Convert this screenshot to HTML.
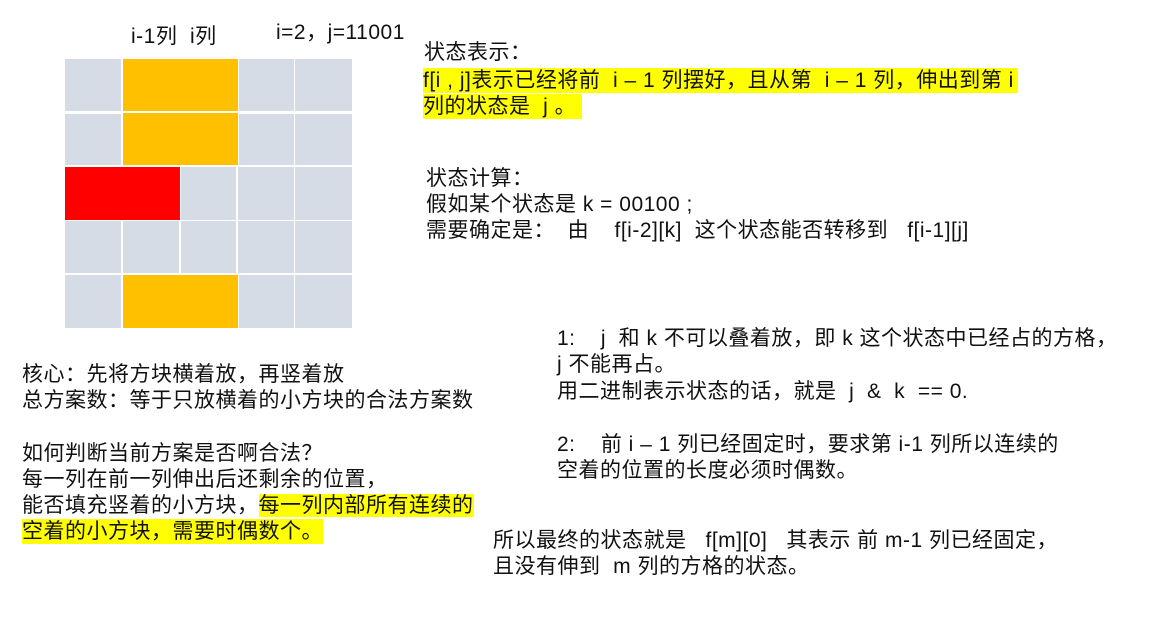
<!DOCTYPE html>
<html><head><meta charset="utf-8"><style>
body{margin:0;width:1153px;height:624px;background:#fff;position:relative;overflow:hidden;font-family:"Liberation Sans","Noto Sans CJK SC",sans-serif;color:#111;}
.c{position:absolute;background:#d6dce5;}
.o{position:absolute;background:#ffc000;}
.r{position:absolute;background:#ff0000;}
.t{position:absolute;font-size:21px;letter-spacing:0.5px;line-height:25px;white-space:pre;}
.h{background:#ffff00;}
</style></head><body>
<div class="t" style="left:131px;top:24px">i-1列  i列</div>
<div class="t" style="left:276px;top:20px">i=2，j=11001</div>

<div class="c" style="left:65px;top:59px;width:56px;height:52px"></div>
<div class="c" style="left:239px;top:59px;width:55px;height:52px"></div>
<div class="c" style="left:295px;top:59px;width:57px;height:52px"></div>
<div class="o" style="left:123px;top:59px;width:115px;height:52px"></div>

<div class="c" style="left:65px;top:114px;width:56px;height:51px"></div>
<div class="c" style="left:239px;top:114px;width:55px;height:51px"></div>
<div class="c" style="left:295px;top:114px;width:57px;height:51px"></div>
<div class="o" style="left:123px;top:113px;width:115px;height:52px"></div>

<div class="r" style="left:65px;top:167px;width:115px;height:53px"></div>
<div class="c" style="left:181px;top:167px;width:55px;height:53px"></div>
<div class="c" style="left:238px;top:167px;width:56px;height:53px"></div>
<div class="c" style="left:295px;top:167px;width:57px;height:53px"></div>

<div class="c" style="left:65px;top:221px;width:56px;height:52px"></div>
<div class="c" style="left:123px;top:221px;width:56px;height:52px"></div>
<div class="c" style="left:181px;top:221px;width:55px;height:52px"></div>
<div class="c" style="left:238px;top:221px;width:56px;height:52px"></div>
<div class="c" style="left:295px;top:221px;width:57px;height:52px"></div>

<div class="c" style="left:65px;top:275px;width:56px;height:53px"></div>
<div class="o" style="left:123px;top:275px;width:115px;height:53px"></div>
<div class="c" style="left:239px;top:275px;width:55px;height:53px"></div>
<div class="c" style="left:295px;top:275px;width:57px;height:53px"></div>

<div class="t" style="left:424px;top:40px">状态表示：</div>
<div class="t h" style="left:423px;top:68px;width:595px;height:25px">f[i , j]表示已经将前  i – 1 列摆好，且从第  i – 1 列，伸出到第 i</div>
<div class="t h" style="left:423px;top:94px;width:159px;height:25px">列的状态是  j 。</div>

<div class="t" style="left:426px;top:166px">状态计算：</div>
<div class="t" style="left:426px;top:192px">假如某个状态是 k = 00100 ;</div>
<div class="t" style="left:426px;top:218px">需要确定是：  由    f[i-2][k]  这个状态能否转移到   f[i-1][j]</div>

<div class="t" style="left:557px;top:326px">1:    j  和 k 不可以叠着放，即 k 这个状态中已经占的方格，</div>
<div class="t" style="left:557px;top:352px">j 不能再占。</div>
<div class="t" style="left:557px;top:379px">用二进制表示状态的话，就是  j  &amp;  k  == 0.</div>
<div class="t" style="left:557px;top:432px">2:    前 i – 1 列已经固定时，要求第 i-1 列所以连续的</div>
<div class="t" style="left:557px;top:458px">空着的位置的长度必须时偶数。</div>

<div class="t" style="left:493px;top:528px">所以最终的状态就是   f[m][0]   其表示 前 m-1 列已经固定，</div>
<div class="t" style="left:493px;top:554px">且没有伸到  m 列的方格的状态。</div>

<div class="t" style="left:22px;top:362px">核心：先将方块横着放，再竖着放</div>
<div class="t" style="left:22px;top:388px">总方案数：等于只放横着的小方块的合法方案数</div>
<div class="t" style="left:22px;top:441px">如何判断当前方案是否啊合法？</div>
<div class="t" style="left:22px;top:467px">每一列在前一列伸出后还剩余的位置，</div>
<div class="t" style="left:22px;top:493px">能否填充竖着的小方块，<span class="h">每一列内部所有连续的</span></div>
<div class="t h" style="left:22px;top:519px">空着的小方块，需要时偶数个。</div>
</body></html>
